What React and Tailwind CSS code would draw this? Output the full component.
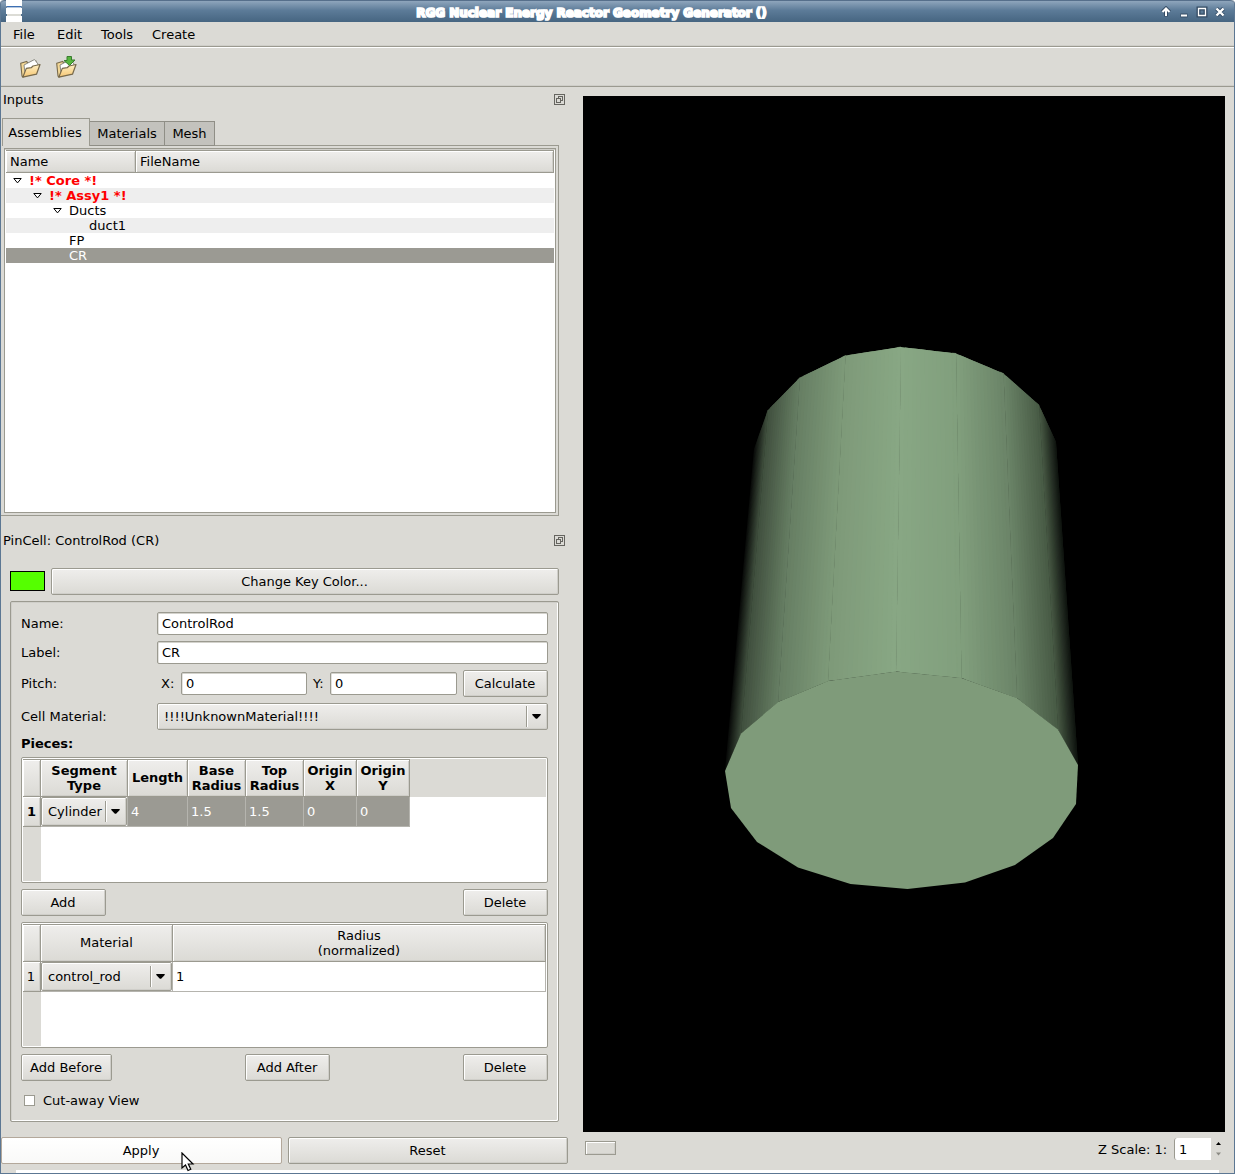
import React from "react";

const EDGE = "border border-[#9b9a90] rounded-[2px]";
const RAISED =
  "bg-gradient-to-b from-[#efeeec] to-[#dbdad5] shadow-[inset_1px_1px_0_#ffffff,inset_-1px_-1px_0_#cfcec9]";

function Button({ children, className = "" }) {
  return (
    <button className={`flex h-[27px] shrink-0 items-center justify-center pr-px ${EDGE} ${RAISED} ${className}`}>
      {children}
    </button>
  );
}

function Field({ value, className = "" }) {
  return (
    <div
      className={`flex h-[23px] items-center bg-white pl-1 shadow-[inset_0_1px_0_#d3d2cc,inset_1px_0_0_#e3e2de] ${EDGE} ${className}`}
    >
      {value}
    </div>
  );
}

function DownArrow() {
  return (
    <svg width="9" height="5" viewBox="0 0 9 5" className="shrink-0">
      <path d="M0.3 0H8.7V0.9L5.1 4.8H3.9L0.3 0.9Z" fill="#000" />
    </svg>
  );
}

function Combo({ value, className = "" }) {
  return (
    <div className={`flex items-center ${EDGE} ${RAISED} ${className}`}>
      <span className="grow pl-1.5">{value}</span>
      <span className="mr-1 h-[21px] w-0.5 border-l border-r border-l-[#9b9a90] border-r-white" />
      <DownArrow />
      <span className="w-1.5" />
    </div>
  );
}

function DockTitle({ children, className = "" }) {
  return (
    <div className={`flex h-4 items-center justify-between pl-0.5 pr-1 ${className}`}>
      <span>{children}</span>
      <svg width="11" height="11" viewBox="0 0 11 11" fill="none" stroke="#65645f" shapeRendering="crispEdges">
        <rect x="0.5" y="0.5" width="10" height="10" rx="1" />
        <path d="M4.5 4V2.5H8.5V6.5H7" />
        <rect x="2.5" y="4.5" width="4" height="4" />
      </svg>
    </div>
  );
}

function Head({ children, className = "" }) {
  return (
    <div
      className={`flex shrink-0 items-center justify-center whitespace-pre border-b border-r border-[#9b9a90] text-center leading-[15px] ${RAISED} ${className}`}
    >
      {children}
    </div>
  );
}

function TitleBar() {
  return (
    <header className="flex h-[22px] shrink-0 items-center rounded-t-[4px] border-t border-[#566f8b] bg-gradient-to-b from-[#8fa5bc] via-[#5c7b98] via-45% to-[#466581] pl-[5px] pr-[7px]">
      <svg width="16" height="22" viewBox="0 0 16 22" className="-mt-px" shapeRendering="crispEdges">
        <path d="M0 0H16V6H0ZM0 8H16V14H0ZM0 16H16V22H0Z" fill="#fff" />
        <path d="M1 6H15V7H1Z" fill="#3d6fb3" />
        <path d="M1 7H15V8H1Z" fill="#b7c9df" />
        <path d="M1 14H15V16H1Z" fill="#dcdcd6" />
      </svg>
      <h1 className="grow pt-[3px] text-center text-[12px] font-bold tracking-[-0.02px] text-white [-webkit-text-stroke:1.7px_#fff]">
        RGG Nuclear Energy Reactor Geometry Generator ()
      </h1>
      <svg width="66" height="12" viewBox="0 0 66 12" fill="none" className="mt-px">
        <g stroke="#354c65" strokeWidth="4">
          <path d="M5 10.5V3M1.5 6L5 2.5L8.5 6M19.5 9.5H26.5M37.5 2.5H44.5V9.5H37.5ZM55.5 2.5L62.5 9.5M62.5 2.5L55.5 9.5" />
        </g>
        <g stroke="#fff" strokeWidth="2">
          <path d="M5 10V3M1.5 6L5 2.5L8.5 6M20 9.5H26" />
          <path d="M37.5 2.5H44.5V9.5H37.5Z" strokeWidth="1.3" />
          <path d="M55.5 2.5L62.5 9.5M62.5 2.5L55.5 9.5" strokeWidth="2.4" />
        </g>
      </svg>
    </header>
  );
}

function FolderIcon({ save }) {
  return (
    <svg width="23" height="24" viewBox="0 0 23 24" strokeLinejoin="round">
      <defs>
        <linearGradient id="folderFront" x1="0" y1="0" x2="0" y2="1">
          <stop offset="0" stopColor="#fff0c4" />
          <stop offset="1" stopColor="#f5c673" />
        </linearGradient>
      </defs>
      <path d="M1.7 8.3L7.5 6.4L9 8L17 6V12L4 22L3 21Z" fill="#f3d796" stroke="#77694b" strokeWidth="1.1" />
      <path d="M5 10L15.5 4.5L19 9L18 14L6 18Z" fill="#fff" stroke="#8b8b83" strokeWidth="1" />
      <path d="M7.3 13.4L12.2 12.7L14 11L21 9.5L17.5 19.2L3.8 22.2Z" fill="url(#folderFront)" stroke="#77694b" strokeWidth="1.2" />
      {save && (
        <path d="M12 1.5H16.5V5H20L14.5 10.5L9 5.5H12Z" fill="#57b53e" stroke="#397c2e" strokeWidth="1" />
      )}
    </svg>
  );
}

const TREE = [
  { label: "!* Core *!", pad: "pl-[7px]", open: true, look: "font-bold text-[#ff0000] bg-white" },
  { label: "!* Assy1 *!", pad: "pl-[27px]", open: true, look: "font-bold text-[#ff0000] bg-[#eeeeee]" },
  { label: "Ducts", pad: "pl-[47px]", open: true, look: "bg-white" },
  { label: "duct1", pad: "pl-[67px]", look: "bg-[#eeeeee]" },
  { label: "FP", pad: "pl-[47px]", look: "bg-white" },
  { label: "CR", pad: "pl-[47px]", look: "bg-[#9b9a93] text-white" },
];

function Tree() {
  return (
    <div className="h-[365px] w-[552px] border border-[#9b9a90] bg-white p-px shadow-[inset_0_1px_0_#cfcec9]">
      <div className="flex h-[23px] border-t border-[#9b9a90]">
        <Head className="w-[130px] !justify-start pl-1">Name</Head>
        <Head className="w-[418px] !justify-start pl-1">FileName</Head>
      </div>
      {TREE.map((row) => (
        <div key={row.label} className={`flex h-[15px] items-center leading-[15px] ${row.pad} ${row.look}`}>
          <span className="w-4 shrink-0">
            {row.open && (
              <svg width="9" height="6" viewBox="0 0 9 6" fill="#fff" stroke="#000">
                <path d="M0.8 0.5H8.2L4.5 4.9Z" />
              </svg>
            )}
          </span>
          <span>{row.label}</span>
        </div>
      ))}
    </div>
  );
}

function InputsDock() {
  return (
    <section className="h-[425px] pt-1">
      <DockTitle>Inputs</DockTitle>
      <div className="mt-[11px] flex h-[28px] items-end pl-px">
        <div className="flex h-[28px] w-[88px] items-center justify-center border-l border-r border-t border-[#9b9a90] bg-[#dbdad5] pr-0.5">
          Assemblies
        </div>
        <div className="flex h-[25px] w-[75px] items-center justify-center border-b border-r border-t border-[#8f8e86] bg-[#c3c2bd]">
          Materials
        </div>
        <div className="flex h-[25px] w-[50px] items-center justify-center border-b border-r border-t border-[#8f8e86] bg-[#c3c2bd]">
          Mesh
        </div>
        <div className="h-px w-[344px] bg-[#9b9a90]" />
      </div>
      <div className="h-[370px] w-[558px] border-b border-r border-[#9b9a90] pl-[3px] pt-0.5">
        <Tree />
      </div>
    </section>
  );
}

const PIECE_COLUMNS = [
  { title: "Length", value: "4", width: "w-[60px]" },
  { title: "Base\nRadius", value: "1.5", width: "w-[58px]" },
  { title: "Top\nRadius", value: "1.5", width: "w-[58px]" },
  { title: "Origin\nX", value: "0", width: "w-[53px]" },
  { title: "Origin\nY", value: "0", width: "w-[53px]" },
];

function PiecesTable() {
  return (
    <div className={`flex h-[126px] flex-col bg-white p-px ${EDGE}`}>
      <div className="flex h-[38px] shrink-0 bg-[#dbdad5] font-bold">
        <Head className="w-[18px] border-t" />
        <Head className="w-[87px] border-t">{"Segment\nType"}</Head>
        {PIECE_COLUMNS.map((c) => (
          <Head key={c.title} className={`border-t pb-px ${c.width}`}>
            {c.title}
          </Head>
        ))}
      </div>
      <div className="flex h-[30px] shrink-0">
        <Head className="w-[18px] font-bold">1</Head>
        <div className="w-[87px] border-b border-r border-[#b5b4ae]">
          <Combo value="Cylinder" className="h-[29px] w-[86px]" />
        </div>
        {PIECE_COLUMNS.map((c) => (
          <div
            key={c.title}
            className={`flex items-center border-b border-r border-[#b5b4ae] bg-[#9b9a93] pl-[3px] text-white ${c.width}`}
          >
            {c.value}
          </div>
        ))}
      </div>
      <div className="w-[18px] grow bg-[#dbdad5]" />
    </div>
  );
}

function MaterialTable() {
  return (
    <div className={`flex h-[126px] flex-col bg-white p-px ${EDGE}`}>
      <div className="flex h-[38px] shrink-0">
        <Head className="w-[18px] border-t" />
        <Head className="w-[132px] border-t pb-px">Material</Head>
        <Head className="w-[373px] border-t">{"Radius\n(normalized)"}</Head>
      </div>
      <div className="flex h-[30px] shrink-0">
        <Head className="w-[18px] pr-px">1</Head>
        <div className="w-[132px] border-b border-r border-[#b5b4ae]">
          <Combo value="control_rod" className="h-[29px] w-[131px]" />
        </div>
        <div className="flex w-[373px] items-center border-b border-r border-[#b5b4ae] pl-[3px]">1</div>
      </div>
      <div className="w-[18px] grow bg-[#dbdad5]" />
    </div>
  );
}

function PinCellDock() {
  return (
    <section className="pt-5">
      <DockTitle>PinCell: ControlRod (CR)</DockTitle>
      <div className="mt-5 flex items-start gap-1.5 pl-[9px]">
        <div className="mt-[3px] h-5 w-[35px] border border-black bg-[#55ff00]" />
        <Button className="w-[508px]">Change Key Color...</Button>
      </div>
      <div
        className={`ml-[9px] mt-1.5 flex h-[521px] w-[549px] flex-col px-2.5 pt-2.5 shadow-[inset_1px_1px_0_#cfcec9,inset_-1px_-1px_0_#ffffff] ${EDGE}`}
      >
        <div className="flex items-center">
          <label className="w-[136px]">Name:</label>
          <Field value="ControlRod" className="w-[391px]" />
        </div>
        <div className="mt-1.5 flex items-center">
          <label className="w-[136px]">Label:</label>
          <Field value="CR" className="w-[391px]" />
        </div>
        <div className="mt-1.5 flex items-center">
          <label className="w-[140px]">Pitch:</label>
          <label className="w-5">X:</label>
          <Field value="0" className="w-[126px]" />
          <label className="w-[23px] pl-1.5">Y:</label>
          <Field value="0" className="w-[127px]" />
          <Button className="ml-1.5 w-[85px]">Calculate</Button>
        </div>
        <div className="mt-1.5 flex items-center">
          <label className="w-[136px]">Cell Material:</label>
          <Combo value="!!!!UnknownMaterial!!!!" className="h-[27px] w-[391px]" />
        </div>
        <div className="flex h-[27px] items-center font-bold">Pieces:</div>
        <PiecesTable />
        <div className="my-1.5 flex justify-between">
          <Button className="w-[85px]">Add</Button>
          <Button className="w-[85px]">Delete</Button>
        </div>
        <MaterialTable />
        <div className="mt-1.5 flex">
          <Button className="w-[91px]">Add Before</Button>
          <Button className="ml-[133px] w-[85px]">Add After</Button>
          <Button className="ml-[133px] w-[85px]">Delete</Button>
        </div>
        <label className="mt-3 flex items-center gap-2 pl-[3px]">
          <span className="size-[11px] border border-[#9b9a90] bg-white" />
          Cut-away View
        </label>
      </div>
      <div className="mt-[15px] flex gap-1.5">
        <button className="flex h-[27px] w-[281px] items-center justify-center rounded-[2px] border border-[#b3a89b] bg-gradient-to-b from-white to-[#f9f9f8] pr-px">
          Apply
        </button>
        <Button className="w-[280px]">Reset</Button>
      </div>
    </section>
  );
}

const FAR_RIM = [
  [754, 449], [768, 410], [800, 377.5], [845.5, 355.5], [901, 347],
  [956, 353.5], [1003.5, 373.5], [1039, 405], [1056, 442],
];
const NEAR_RIM = [
  [725, 771], [741, 733.5], [778, 702], [828, 681], [896, 671.5],
  [961.5, 678], [1017, 698], [1058, 729.5], [1078, 765],
];
const NEAR_REST = [
  [1076, 804], [1053, 838], [1015, 865], [965, 882.5], [907.5, 889],
  [850.5, 884], [798, 867.5], [757, 842], [731, 808],
];
const SHADES = [
  [8, 10, 8], [64, 79, 62], [102, 126, 99], [126, 154, 121], [136, 167, 132],
  [129, 159, 125], [107, 132, 104], [72, 90, 69], [14, 18, 14],
];
const STEPS = 14;
const mix = (a, b, t) => a.map((v, i) => v + (b[i] - v) * t);
const pts = (list) => list.map((p) => p.join(",")).join(" ");

function Cylinder() {
  const strips = [];
  for (let i = 0; i < 8; i++) {
    for (let s = 0; s < STEPS; s++) {
      const t = s / STEPS;
      const end = Math.min(1, (s + 2) / STEPS);
      const color = mix(SHADES[i], SHADES[i + 1], (s + 0.5) / STEPS).map(Math.round);
      const fill = `rgb(${color.join(",")})`;
      strips.push(
        <polygon
          key={`${i}-${s}`}
          fill={fill}
          stroke={s === STEPS - 1 && i < 7 ? fill : "none"}
          strokeWidth="0.5"
          points={pts([
            mix(FAR_RIM[i], FAR_RIM[i + 1], t),
            mix(FAR_RIM[i], FAR_RIM[i + 1], end),
            mix(NEAR_RIM[i], NEAR_RIM[i + 1], end),
            mix(NEAR_RIM[i], NEAR_RIM[i + 1], t),
          ])}
        />
      );
    }
  }
  return (
    <svg width="642" height="1036" viewBox="583 96 642 1036" className="block bg-black">
      {strips}
      <polygon fill="#7f9b7a" points={pts([...NEAR_RIM, ...NEAR_REST])} />
    </svg>
  );
}

function ViewPane() {
  return (
    <section className="w-[642px] pt-[9px]">
      <Cylinder />
      <div className="flex h-[34px] items-center pl-0.5">
        <div className="-mt-0.5 h-[14px] w-[31px] border border-[#9b9a90] bg-[#dbdad5] shadow-[inset_1px_1px_0_#fff,inset_-1px_-1px_0_#cfcec9]" />
        <span className="ml-[482px] w-[76px]">Z Scale: 1:</span>
        <div className="flex h-[22px] w-[37px] items-center rounded-l-[3px] border-l border-[#9b9a90] bg-white pl-1">1</div>
        <svg width="7" height="14" viewBox="0 0 7 14" className="ml-1">
          <path d="M1 3L3.5 0L6 3Z" fill="#000" />
          <path d="M1 10.5H6L3.5 13.5Z" fill="#8b8a84" />
        </svg>
      </div>
    </section>
  );
}

export default function App() {
  return (
    <div className="relative h-[1174px] w-[1235px] overflow-hidden bg-white font-['DejaVu_Sans',sans-serif] text-[13px] leading-[15px] text-black">
      <div className="flex h-full flex-col rounded-t-[4px] border-x border-b border-[#5c7793] bg-[#dbdad5]">
        <TitleBar />
        <nav className="flex h-[25px] shrink-0 items-center border-b border-[#9b9a90] pl-3 shadow-[inset_0_-1px_0_#cfcec9]">
          <span className="w-[44px]">File</span>
          <span className="w-[44px]">Edit</span>
          <span className="w-[51px]">Tools</span>
          <span>Create</span>
        </nav>
        <div className="flex h-10 shrink-0 items-center gap-[13px] border-b border-t border-b-[#9b9a90] border-t-white pb-px pl-[18px] shadow-[inset_0_-1px_0_#cfcec9]">
          <FolderIcon />
          <FolderIcon save />
        </div>
        <main className="flex h-[1083px] shrink-0">
          <div className="w-[568px]">
            <InputsDock />
            <PinCellDock />
          </div>
          <div className="w-[14px]" />
          <ViewPane />
        </main>
        <div className="mx-[15px] h-[3px] shrink-0 bg-white" />
      </div>
      <svg width="14" height="20" viewBox="0 0 14 20" className="absolute left-[181px] top-[1152px]">
        <path d="M1 1V16L4.5 13L7 18.5L9.8 17.2L7.3 12H12Z" fill="#fff" stroke="#000" strokeWidth="1.2" />
      </svg>
    </div>
  );
}
